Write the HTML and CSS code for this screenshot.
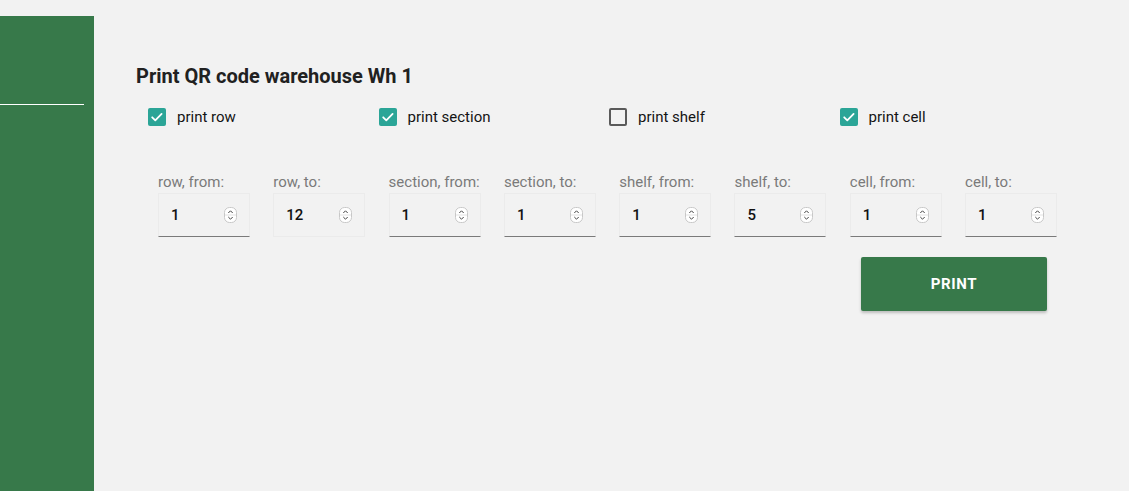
FILE: index.html
```html
<!DOCTYPE html>
<html>
<head>
<meta charset="utf-8">
<link rel="stylesheet" href="styles.css">
</head>
<body>
<div class="page">
  <aside class="sidebar"><div class="side-line"></div></aside>
  <main class="main">
    <h1 class="title">Print QR code warehouse Wh 1</h1>
    <div class="checks">
      <label class="check"><span class="box on"><svg viewBox="0 0 18 18" width="18" height="18"><path d="M4.2 9.3l3.1 3 6.3-6.4" fill="none" stroke="#fff" stroke-width="1.8" stroke-linecap="round" stroke-linejoin="round"/></svg></span><span class="ctext">print row</span></label>
      <label class="check"><span class="box on"><svg viewBox="0 0 18 18" width="18" height="18"><path d="M4.2 9.3l3.1 3 6.3-6.4" fill="none" stroke="#fff" stroke-width="1.8" stroke-linecap="round" stroke-linejoin="round"/></svg></span><span class="ctext">print section</span></label>
      <label class="check"><span class="box off"></span><span class="ctext">print shelf</span></label>
      <label class="check"><span class="box on"><svg viewBox="0 0 18 18" width="18" height="18"><path d="M4.2 9.3l3.1 3 6.3-6.4" fill="none" stroke="#fff" stroke-width="1.8" stroke-linecap="round" stroke-linejoin="round"/></svg></span><span class="ctext">print cell</span></label>
    </div>
    <div class="fields">
      <div class="field"><div class="flabel">row, from:</div><div class="input"><span class="val">1</span><span class="spin"><svg viewBox="0 0 13 16" width="13" height="16"><rect x="0.5" y="0.5" width="12" height="15" rx="5" fill="#fff" stroke="#c8c8c8"/><line x1="1" y1="8" x2="12" y2="8" stroke="#e2e2e2"/><path d="M4.3 6l2.2-2.2L8.7 6M4.3 10l2.2 2.2L8.7 10" fill="none" stroke="#444" stroke-width="1"/></svg></span></div></div>
      <div class="field"><div class="flabel">row, to:</div><div class="input plain"><span class="val">12</span><span class="spin"><svg viewBox="0 0 13 16" width="13" height="16"><rect x="0.5" y="0.5" width="12" height="15" rx="5" fill="#fff" stroke="#c8c8c8"/><line x1="1" y1="8" x2="12" y2="8" stroke="#e2e2e2"/><path d="M4.3 6l2.2-2.2L8.7 6M4.3 10l2.2 2.2L8.7 10" fill="none" stroke="#444" stroke-width="1"/></svg></span></div></div>
      <div class="field"><div class="flabel">section, from:</div><div class="input"><span class="val">1</span><span class="spin"><svg viewBox="0 0 13 16" width="13" height="16"><rect x="0.5" y="0.5" width="12" height="15" rx="5" fill="#fff" stroke="#c8c8c8"/><line x1="1" y1="8" x2="12" y2="8" stroke="#e2e2e2"/><path d="M4.3 6l2.2-2.2L8.7 6M4.3 10l2.2 2.2L8.7 10" fill="none" stroke="#444" stroke-width="1"/></svg></span></div></div>
      <div class="field"><div class="flabel">section, to:</div><div class="input"><span class="val">1</span><span class="spin"><svg viewBox="0 0 13 16" width="13" height="16"><rect x="0.5" y="0.5" width="12" height="15" rx="5" fill="#fff" stroke="#c8c8c8"/><line x1="1" y1="8" x2="12" y2="8" stroke="#e2e2e2"/><path d="M4.3 6l2.2-2.2L8.7 6M4.3 10l2.2 2.2L8.7 10" fill="none" stroke="#444" stroke-width="1"/></svg></span></div></div>
      <div class="field"><div class="flabel">shelf, from:</div><div class="input"><span class="val">1</span><span class="spin"><svg viewBox="0 0 13 16" width="13" height="16"><rect x="0.5" y="0.5" width="12" height="15" rx="5" fill="#fff" stroke="#c8c8c8"/><line x1="1" y1="8" x2="12" y2="8" stroke="#e2e2e2"/><path d="M4.3 6l2.2-2.2L8.7 6M4.3 10l2.2 2.2L8.7 10" fill="none" stroke="#444" stroke-width="1"/></svg></span></div></div>
      <div class="field"><div class="flabel">shelf, to:</div><div class="input"><span class="val">5</span><span class="spin"><svg viewBox="0 0 13 16" width="13" height="16"><rect x="0.5" y="0.5" width="12" height="15" rx="5" fill="#fff" stroke="#c8c8c8"/><line x1="1" y1="8" x2="12" y2="8" stroke="#e2e2e2"/><path d="M4.3 6l2.2-2.2L8.7 6M4.3 10l2.2 2.2L8.7 10" fill="none" stroke="#444" stroke-width="1"/></svg></span></div></div>
      <div class="field"><div class="flabel">cell, from:</div><div class="input"><span class="val">1</span><span class="spin"><svg viewBox="0 0 13 16" width="13" height="16"><rect x="0.5" y="0.5" width="12" height="15" rx="5" fill="#fff" stroke="#c8c8c8"/><line x1="1" y1="8" x2="12" y2="8" stroke="#e2e2e2"/><path d="M4.3 6l2.2-2.2L8.7 6M4.3 10l2.2 2.2L8.7 10" fill="none" stroke="#444" stroke-width="1"/></svg></span></div></div>
      <div class="field"><div class="flabel">cell, to:</div><div class="input"><span class="val">1</span><span class="spin"><svg viewBox="0 0 13 16" width="13" height="16"><rect x="0.5" y="0.5" width="12" height="15" rx="5" fill="#fff" stroke="#c8c8c8"/><line x1="1" y1="8" x2="12" y2="8" stroke="#e2e2e2"/><path d="M4.3 6l2.2-2.2L8.7 6M4.3 10l2.2 2.2L8.7 10" fill="none" stroke="#444" stroke-width="1"/></svg></span></div></div>
    </div>
    <div class="actions"><button class="print">PRINT</button></div>
  </main>
</div>
</body>
</html>
```
FILE: styles.css
```css
html, body {
  margin: 0;
  padding: 0;
  height: 100%;
  background: #f2f2f2;
  font-family: Roboto, "Liberation Sans", Arial, sans-serif;
}
.page {
  display: flex;
  height: 100%;
  padding-top: 16px;
  box-sizing: border-box;
}
.sidebar {
  width: 94px;
  flex: 0 0 94px;
  background: #37794a;
  padding-top: 88px;
  box-sizing: border-box;
}
.side-line {
  width: 84px;
  height: 1px;
  background: #ffffff;
}
.main {
  flex: 1;
  padding: 48px 0 0 42px;
}
.title {
  margin: 0;
  font-size: 20px;
  line-height: 24px;
  font-weight: 700;
  color: #212121;
}
.checks {
  display: grid;
  grid-template-columns: repeat(4, 230.5px);
  margin: 20px 0 0 12px;
}
.check {
  display: flex;
  align-items: center;
  height: 18px;
}
.box {
  width: 18px;
  height: 18px;
  box-sizing: border-box;
  border-radius: 2px;
  flex: 0 0 18px;
  display: block;
}
.box svg { display: block; }
.box.on { background: #2ba597; }
.box.off { border: 2px solid #5a5a5a; }
.ctext {
  margin-left: 11px;
  font-size: 15px;
  line-height: 18px;
  color: #141414;
}
.fields {
  display: grid;
  grid-template-columns: repeat(8, 115.3px);
  margin: 48px 0 0 22px;
}
.flabel {
  font-size: 15px;
  line-height: 16px;
  color: #7a7a7a;
  margin-bottom: 3px;
}
.input {
  width: 92px;
  height: 44px;
  box-sizing: border-box;
  border: 1px solid #ebebeb;
  border-bottom: 1px solid #7a7a7a;
  display: flex;
  align-items: center;
  padding: 0 12px 0 12px;
  justify-content: space-between;
}
.input.plain { border-bottom-color: #ebebeb; }
.val {
  font-size: 15px;
  font-weight: 500;
  color: #111;
}
.spin { display: block; height: 16px; }
.spin svg { display: block; }
.actions {
  display: flex;
  justify-content: flex-end;
  padding-right: 82px;
  margin-top: 20px;
}
.print {
  width: 186px;
  height: 54px;
  border: none;
  border-radius: 2px;
  background: #37794a;
  color: #fff;
  font-family: Roboto, "Liberation Sans", Arial, sans-serif;
  font-size: 15px;
  font-weight: 700;
  letter-spacing: 0.6px;
  box-shadow: 0 2px 3px rgba(0,0,0,0.22);
}
```
